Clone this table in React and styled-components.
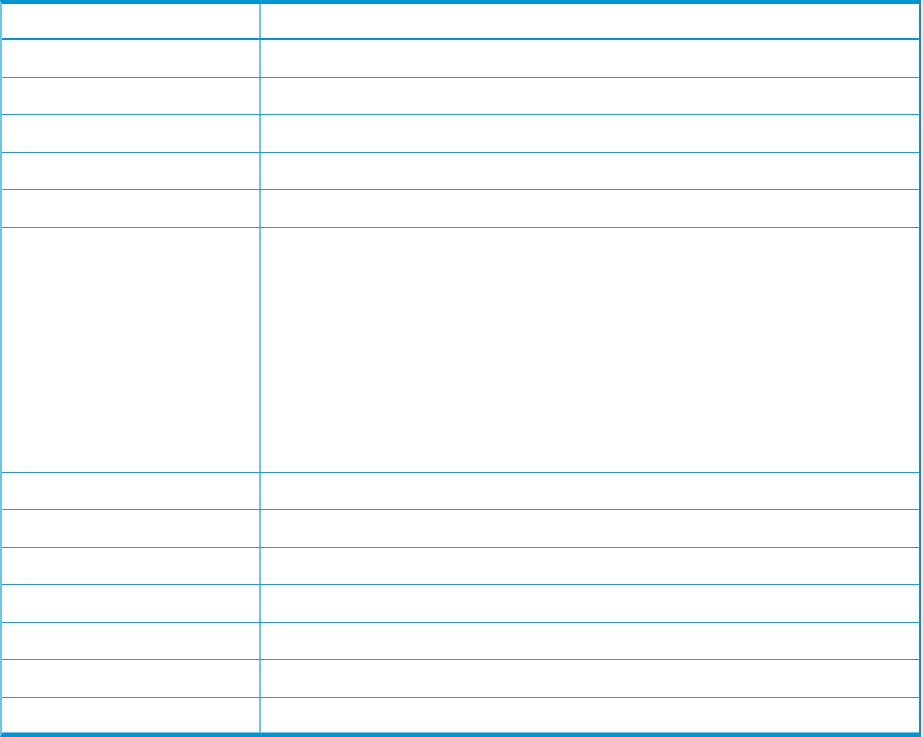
import React from "react";
import styled, { createGlobalStyle } from "styled-components";

const GlobalStyle = createGlobalStyle`
  html, body {
    margin: 0;
    padding: 0;
    background: #ffffff;
    font-family: "Liberation Sans", Arial, sans-serif;
  }
`;

const COLORS = {
  heavy: "#0096d6",
  line: "#1e9cd8",
  soft: "#6cc4ec",
};

const StyledTable = styled.div`
  width: 921px;
  box-sizing: border-box;
  border-top: 4px solid ${COLORS.heavy};
  border-bottom: 5px solid ${COLORS.heavy};
  border-left: 2px solid ${COLORS.soft};
  border-right: 2px solid ${COLORS.heavy};
  display: flex;
  flex-direction: column;
`;

const StyledRow = styled.div`
  display: grid;
  grid-template-columns: 257px 1fr;
  box-sizing: border-box;
  height: ${(p) => p.$height}px;
  border-bottom: ${(p) => (p.$head ? `2px solid ${COLORS.heavy}` : `1px solid ${COLORS.line}`)};
  &:last-child {
    border-bottom: 1px solid ${COLORS.soft};
  }
`;

const StyledCell = styled.div`
  & + & {
    border-left: 2px solid ${COLORS.soft};
  }
`;

const rows = [
  { height: 36, head: true },
  { height: 37.5 },
  { height: 37.5 },
  { height: 37.5 },
  { height: 37.5 },
  { height: 37.5 },
  { height: 245 },
  { height: 37.5 },
  { height: 37.5 },
  { height: 37.5 },
  { height: 37.5 },
  { height: 37.5 },
  { height: 37.5 },
  { height: 35 },
];

const App = () => {
  return (
    <>
      <GlobalStyle />
      <StyledTable>
        {rows.map((row, i) => (
          <StyledRow key={i} $height={row.height} $head={row.head}>
            <StyledCell />
            <StyledCell />
          </StyledRow>
        ))}
      </StyledTable>
    </>
  );
};

export default App;
